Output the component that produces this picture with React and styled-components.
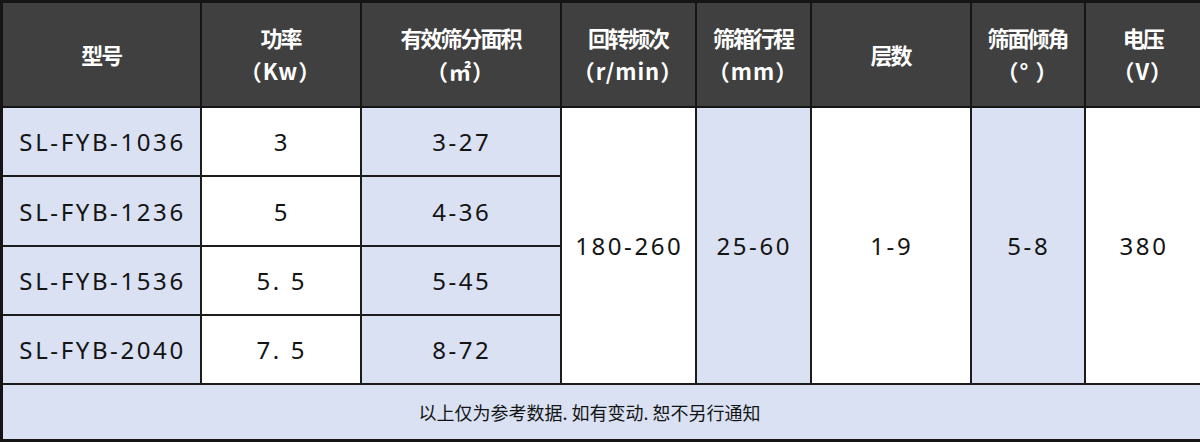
import React from "react";
import styled, { createGlobalStyle } from "styled-components";

const Global = createGlobalStyle`
  html, body { margin: 0; padding: 0; background: #ffffff; }
  body { font-family: "Noto Sans", "Noto Sans CJK SC", sans-serif; }
`;

const Table = styled.table`
  width: 1200px;
  height: 442px;
  border-collapse: collapse;
  table-layout: fixed;
  border: 3px solid #151515;
`;

const HeadCell = styled.th`
  background: #404040;
  color: #ffffff;
  border: 2px solid #151515;
  font-family: "Noto Sans CJK SC", "Noto Sans", sans-serif;
  font-weight: 700;
  font-size: 22px;
  line-height: 33px;
  letter-spacing: -2px;
  text-align: center;
  vertical-align: middle;
  padding: 0;
`;

const Unit = styled.div`
  letter-spacing: 1px;
  font-size: 22px;
`;

const Cell = styled.td`
  background: ${(p) => (p.$tint ? "#d9e1f2" : "#ffffff")};
  color: #141414;
  border: 2px solid #1c1c1c;
  font-family: "Noto Sans", "Noto Sans CJK SC", sans-serif;
  font-size: 24px;
  letter-spacing: 2.6px;
  text-align: center;
  vertical-align: middle;
  padding: 0 0 0 2.6px;
`;

const NoteCell = styled.td`
  background: #d9e1f2;
  color: #141414;
  border: 2px solid #1c1c1c;
  font-family: "Noto Sans CJK SC", "Noto Sans", sans-serif;
  font-size: 18px;
  text-align: center;
  vertical-align: middle;
  padding: 0 24px 0 0;
`;

const HeadRow = styled.tr`
  height: 105px;
`;

const BodyRow = styled.tr`
  height: ${(p) => p.$h}px;
`;

const widths = [199, 160, 200, 135, 115, 160, 114, 117];

const headers = [
  ["型号"],
  ["功率", "（Kw）"],
  ["有效筛分面积", "（㎡）"],
  ["回转频次", "（r/min）"],
  ["筛箱行程", "（mm）"],
  ["层数"],
  ["筛面倾角", "（° ）"],
  ["电压", "（V）"],
];

const rows = [
  ["SL-FYB-1036", "3", "3-27"],
  ["SL-FYB-1236", "5", "4-36"],
  ["SL-FYB-1536", "5. 5", "5-45"],
  ["SL-FYB-2040", "7. 5", "8-72"],
];

const heights = [69, 70, 68, 69];

export default function App() {
  return (
    <>
      <Global />
      <Table>
        <colgroup>
          {widths.map((w, i) => (
            <col key={i} style={{ width: w }} />
          ))}
        </colgroup>
        <thead>
          <HeadRow>
            {headers.map((h, i) => (
              <HeadCell key={i}>
                <div>{h[0]}</div>
                {h[1] && <Unit>{h[1]}</Unit>}
              </HeadCell>
            ))}
          </HeadRow>
        </thead>
        <tbody>
          {rows.map((r, i) => (
            <BodyRow key={i} $h={heights[i]}>
              <Cell $tint>{r[0]}</Cell>
              <Cell>{r[1]}</Cell>
              <Cell $tint>{r[2]}</Cell>
              {i === 0 && (
                <>
                  <Cell rowSpan={4}>180-260</Cell>
                  <Cell rowSpan={4} $tint>25-60</Cell>
                  <Cell rowSpan={4}>1-9</Cell>
                  <Cell rowSpan={4} $tint>5-8</Cell>
                  <Cell rowSpan={4}>380</Cell>
                </>
              )}
            </BodyRow>
          ))}
          <BodyRow $h={56}>
            <NoteCell colSpan={8}>以上仅为参考数据. 如有变动. 恕不另行通知</NoteCell>
          </BodyRow>
        </tbody>
      </Table>
    </>
  );
}
